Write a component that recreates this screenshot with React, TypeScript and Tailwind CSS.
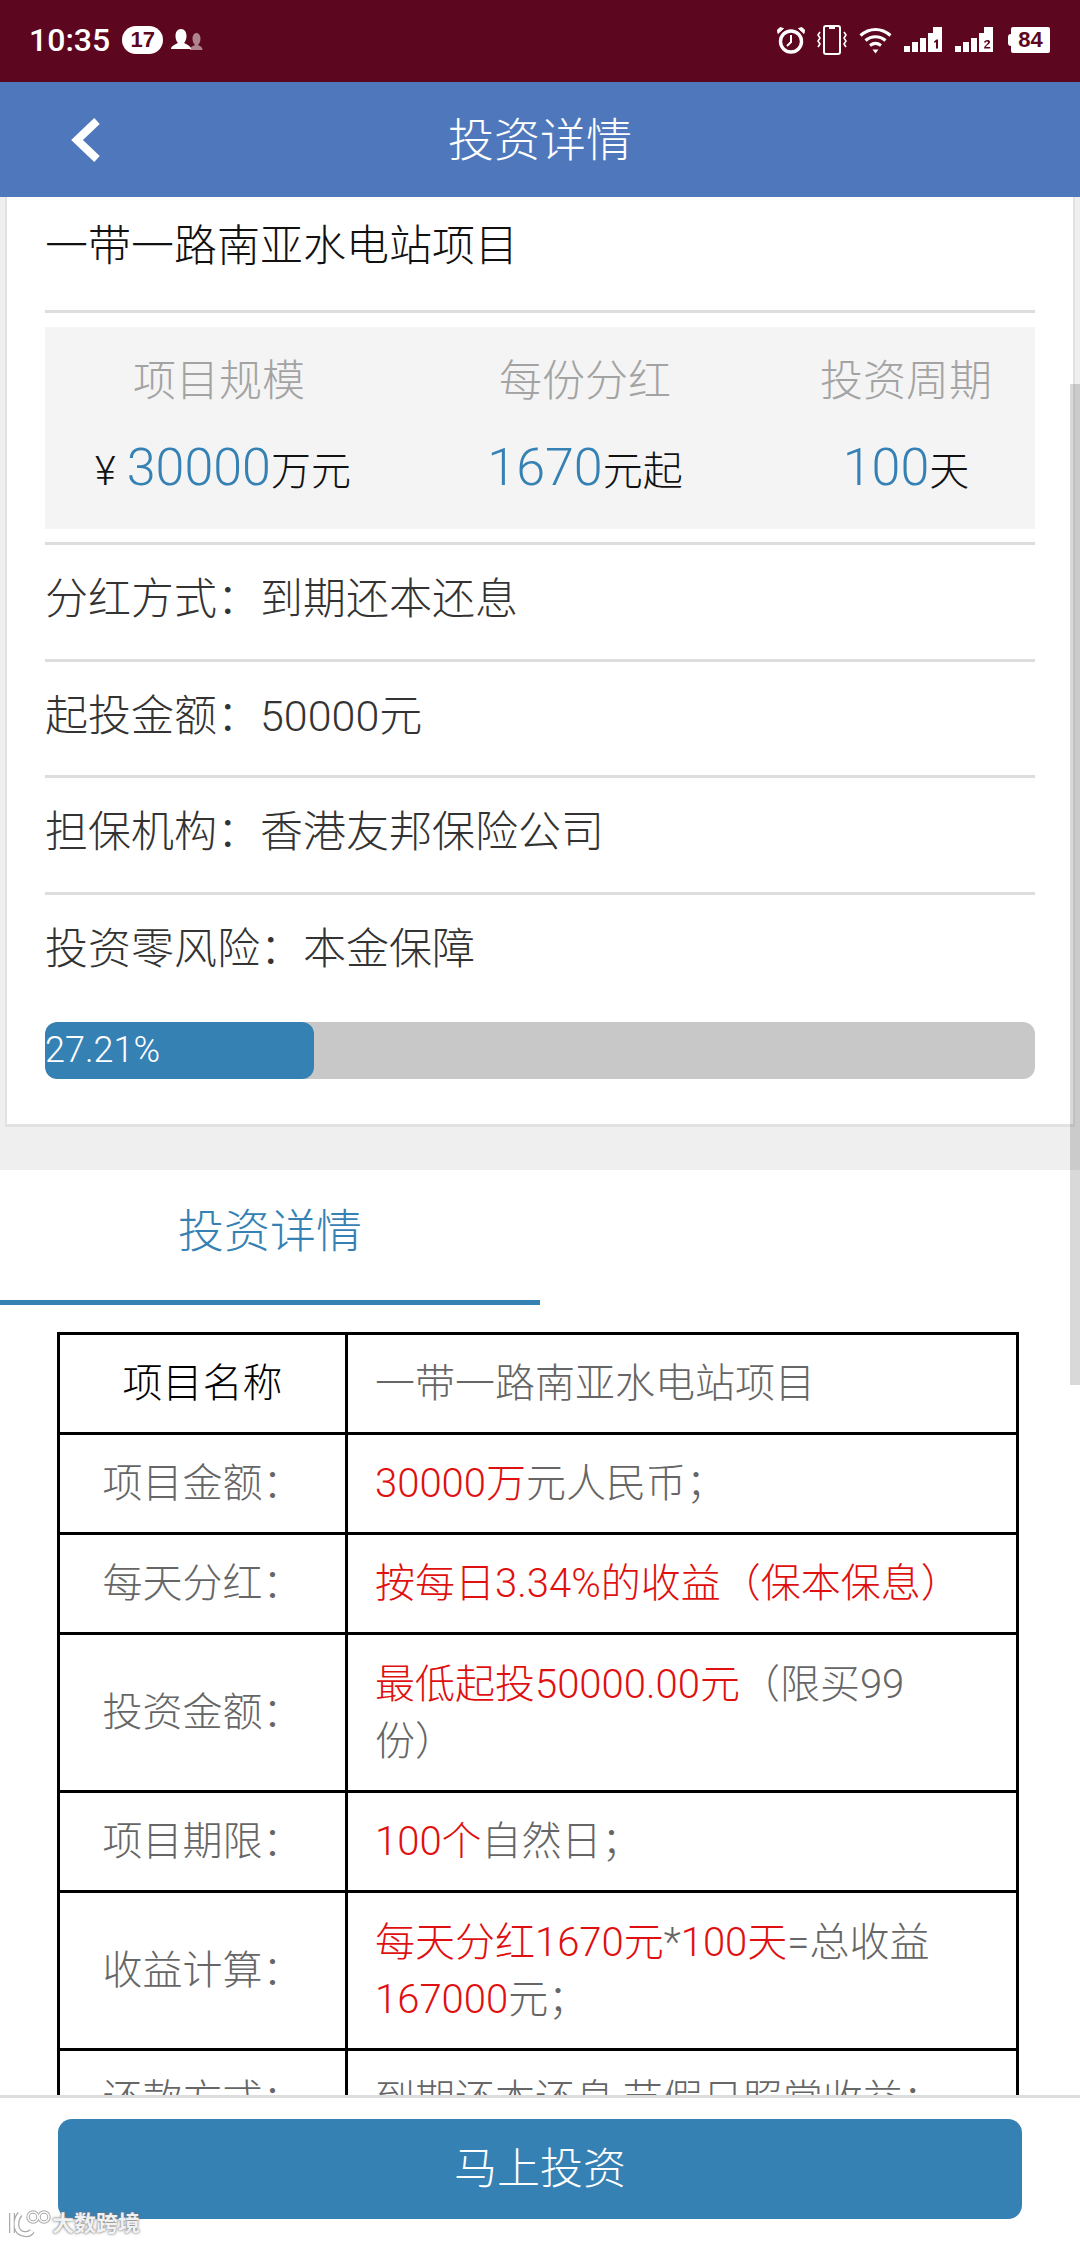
const font = "font-['Roboto','Noto_Sans_CJK_SC',sans-serif]";

function StatusIcons() {
  return (
    <div className="flex items-center">
      {/* alarm */}
      <svg width="28" height="28" viewBox="0 0 28 28">
        <circle cx="14" cy="15.5" r="10.5" fill="none" stroke="#fff" strokeWidth="3.4" />
        <path d="M14 9v7l-4 4" fill="none" stroke="#fff" strokeWidth="2" />
        <path d="M1 7.5 6.5 2.5 3 1.5 0.5 4zM27 7.5 21.5 2.5 25 1.5 27.500 4z" fill="#fff" stroke="#fff" strokeWidth="1" />
      </svg>
      {/* vibrate */}
      <svg width="30" height="30" viewBox="0 0 30 30" className="ml-3">
        <rect x="7" y="1" width="16" height="28" rx="2" fill="none" stroke="#fff" strokeWidth="2" />
        <path d="M12 3h6" stroke="#fff" strokeWidth="2" />
        <path d="M3 7 1 10l2 3-2 3 2 3-2 3M27 7l2 3-2 3 2 3-2 3 2 3" fill="none" stroke="#fff" strokeWidth="1.6" />
      </svg>
      {/* wifi */}
      <svg width="33" height="28" viewBox="0 0 33 28" className="ml-3">
        <path d="M1.5 9.5c9-8 21-8 30 0" fill="none" stroke="#fff" strokeWidth="3.2" />
        <path d="M6.5 14.5c6-5 14-5 20 0" fill="none" stroke="#fff" strokeWidth="3.2" />
        <path d="M11 19.500c3.500-2.700 7.500-2.700 11 0" fill="none" stroke="#fff" strokeWidth="3" />
        <path d="M13.500 23.500h6l-3 4z" fill="#fff" />
      </svg>
      {/* sim 1 */}
      <svg width="38" height="26" viewBox="0 0 38 26" className="ml-3">
        <path d="M0 19h6v6H0zM8 15h6v10H8zM16 11h6v14h-6zM24 6h5V0h9v25H24z" fill="#fff" />
        <path d="M30 14.500l2.500-2h1.500v9h-2v-6.500l-1.300 1z" fill="#5c0620" />
      </svg>
      {/* sim 2 */}
      <svg width="38" height="26" viewBox="0 0 38 26" className="ml-[13px]">
        <path d="M0 19h6v6H0zM8 15h6v10H8zM16 11h6v14h-6zM24 6h5V0h9v25H24z" fill="#fff" />
        <path d="M29 15.500c0-3 6-3.500 6-.5 0 2-4 3.500-4 5h4.200v1.500H29c0-3 4-4.500 4-6.300 0-1-2-1-2.200.3z" fill="#5c0620" />
      </svg>
      {/* battery */}
      <div className="ml-[15px] flex items-center">
        <div className="w-[3px] h-[12px] bg-white rounded-l-sm" />
        <div className="w-[39px] h-[26px] bg-white rounded-[2px] flex items-center justify-center text-[#5c0620] text-[22px] font-bold leading-none font-['Liberation_Sans',sans-serif]">
          84
        </div>
      </div>
    </div>
  );
}

function StatusBar() {
  return (
    <div className="h-[82px] bg-[#5c0620] flex items-center justify-between pl-[29px] pr-[30px] pb-[2px] shrink-0">
      <div className="flex items-center">
        <span className="text-white text-[32px] font-medium leading-none">10:35</span>
        <span className="ml-[12px] w-[41px] h-[28px] rounded-full bg-white flex items-center justify-center text-[#5c0620] text-[22px] font-bold leading-none font-['Liberation_Sans',sans-serif]">
          17
        </span>
        <svg width="34" height="24" viewBox="0 0 34 24" className="ml-[7px]">
          <path d="M20 22c0-3 3-4 5-5-1.500-1.500-2.500-3.500-2.500-6.500 0-3 1.500-5.500 4-5.500s4 2.500 4 5.500c0 3-1 5-2.500 6.500 2 1 4.500 2 4.500 5z" fill="#fff" fillOpacity="0.5" />
          <path d="M1 21c0-3 4-4.500 7-6-1.500-1.500-2.500-4-2.500-7 0-4 2-7 5.500-7s5.500 3 5.500 7c0 3-1 5.500-2.500 7 3 1.500 7 3 7 6z" fill="#fff" />
        </svg>
      </div>
      <StatusIcons />
    </div>
  );
}

function Header() {
  return (
    <div className="h-[115px] bg-[#4f78bc] grid grid-cols-[1fr_auto_1fr] items-center shrink-0">
      <svg width="36" height="48" viewBox="0 0 36 48" className="ml-[67px]">
        <path d="M30 5 10 24l20 19" fill="none" stroke="#fff" strokeWidth="8" />
      </svg>
      <h1 className="text-white text-[46px] font-light leading-none">投资详情</h1>
      <div />
    </div>
  );
}

function InfoRow({ label, value, last }: { label: string; value: string; last?: boolean }) {
  return (
    <div className={`flex items-center text-[43px] font-light text-[#333] leading-none pb-[4px] ${last ? "h-[113px]" : "h-[116.6px] border-b-[3px] border-[#ddd]"}`}>
      {label}：<span>{value}</span>
    </div>
  );
}

function Stat({ label, num, unit, prefix }: { label: string; num: string; unit: string; prefix?: string }) {
  return (
    <div className="flex flex-col items-center">
      <div className="text-[43px] font-light text-[#a3a3a3] leading-none mt-[33px]">{label}</div>
      <div className="flex items-baseline mt-[39px] leading-none whitespace-nowrap">
        {prefix && <span className="text-[40px] text-[#111] ml-[8px] mr-[11px] font-light">{prefix}</span>}
        <span className="text-[52px] font-light text-[#3681b4]">{num}</span>
        <span className="text-[40px] font-light text-[#111]">{unit}</span>
      </div>
    </div>
  );
}

function Card() {
  return (
    <div className="mx-[5px] bg-white border-x-[2px] border-b-[3px] border-[#e2e2e2] px-[38px] h-[930px]">
      <div className="h-[116px] border-b-[3px] border-[#ddd] flex items-center text-[43px] font-light text-[#111] leading-none pb-[14px]">
        一带一路南亚水电站项目
      </div>
      <div className="mt-[14px] h-[202px] bg-[#f4f4f4] grid grid-cols-[348px_384px_258px]">
        <Stat label="项目规模" num="30000" unit="万元" prefix="¥" />
        <Stat label="每份分红" num="1670" unit="元起" />
        <Stat label="投资周期" num="100" unit="天" />
      </div>
      <div className="mt-[13px] border-t-[3px] border-[#ddd]">
        <InfoRow label="分红方式" value="到期还本还息" />
        <InfoRow label="起投金额" value="50000元" />
        <InfoRow label="担保机构" value="香港友邦保险公司" />
        <InfoRow label="投资零风险" value="本金保障" last />
      </div>
      <div className="mt-[14px] h-[57px] bg-[#c8c8c8] rounded-[12px] overflow-hidden">
        <div className="h-full w-[27.21%] bg-[#3681b4] rounded-[12px] text-white text-[36px] font-light leading-[57px]">
          27.21%
        </div>
      </div>
    </div>
  );
}

function Row({ label, strong, h = "h-[100px]", children }: { label: string; strong?: boolean; h?: string; children: React.ReactNode }) {
  return (
    <tr>
      <td className={`${h} w-[288px] border-[3px] border-black text-center ${strong ? "text-black" : "text-[#666]"} p-0`}>{label}</td>
      <td className="border-[3px] border-black pl-[27px] pr-[28px] py-0 text-[#666]">{children}</td>
    </tr>
  );
}

function Red({ children }: { children: React.ReactNode }) {
  return <span className="text-[#e01010]">{children}</span>;
}

function DetailTable() {
  return (
    <table className="ml-[57px] mt-[27px] w-[962px] border-collapse table-fixed text-[40px] font-light leading-[57px]">
      <tbody>
        <Row label="项目名称" strong>一带一路南亚水电站项目</Row>
        <Row label="项目金额："><Red>30000万</Red>元人民币；</Row>
        <Row label="每天分红："><Red>按每日3.34%的收益（保本保息）</Red></Row>
        <Row label="投资金额：" h="h-[158px]"><Red>最低起投50000.00元</Red>（限买99<br />份）</Row>
        <Row label="项目期限："><Red>100个</Red>自然日；</Row>
        <Row label="收益计算：" h="h-[158px]"><Red>每天分红1670元</Red>*<Red>100天</Red>=总收益<br /><Red>167000</Red>元；</Row>
        <Row label="还款方式：">到期还本还息,节假日照常收益；</Row>
      </tbody>
    </table>
  );
}

function Footer() {
  return (
    <div className="absolute left-0 right-0 bottom-0 h-[147px] bg-white border-t-[3px] border-[#ddd] px-[58px] pt-[21px]">
      <button className="w-full h-[100px] bg-[#3681b4] rounded-[14px] text-white text-[43px] font-light leading-none">马上投资</button>
    </div>
  );
}

function Watermark() {
  const logo = "M4 3v20M12 4C7 10 7 20 13 23c5 2 9 1 11-2";
  return (
    <div className="absolute left-[8px] bottom-[4px] flex items-center text-white/90 text-[22px] font-bold leading-none [text-shadow:0_0_3px_#777,0_0_1px_#777]">
      <svg width="44" height="28" viewBox="0 0 44 28">
        <path d={logo} fill="none" stroke="#aaa" strokeWidth="6" />
        <circle cx="25" cy="7" r="5" fill="none" stroke="#aaa" strokeWidth="3.500" />
        <circle cx="36" cy="7" r="5" fill="none" stroke="#aaa" strokeWidth="3.500" />
        <path d={logo} fill="none" stroke="#fff" strokeWidth="3.500" />
        <circle cx="25" cy="7" r="5" fill="none" stroke="#fff" strokeWidth="1.500" />
        <circle cx="36" cy="7" r="5" fill="none" stroke="#fff" strokeWidth="1.500" />
      </svg>
      大数跨境
    </div>
  );
}

export default function App() {
  return (
    <div className={`relative w-[1080px] h-[2242px] overflow-hidden bg-white flex flex-col ${font}`}>
      <StatusBar />
      <Header />
      <div className="flex-1 overflow-hidden">
        <div className="bg-[#efefef] pb-[43px]">
          <Card />
        </div>
        <div className="h-[135px] w-[540px] border-b-[5px] border-[#3681b4] flex items-center justify-center text-[46px] font-light text-[#3681b4] leading-none pb-[8px]">
          投资详情
        </div>
        <DetailTable />
      </div>
      <div className="absolute right-0 top-[384px] w-[10px] h-[1001px] bg-black/15" />
      <Footer />
      <Watermark />
    </div>
  );
}
